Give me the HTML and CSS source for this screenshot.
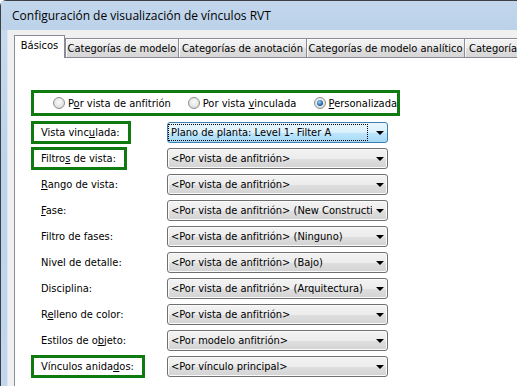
FILE: index.html
```html
<!DOCTYPE html>
<html lang="es">
<head>
  <meta charset="UTF-8">
  <title>Configuración de visualización de vínculos RVT</title>
  <link rel="stylesheet" href="styles.css">
</head>
<body>
  <div class="window">
    <div class="titlebar">Configuración de visualización de vínculos RVT</div>

    <div class="client">
      <!-- pestañas -->
      <div class="tabs">
        <div class="tab active">Básicos</div>
        <div class="tab w2">Categorías de modelo</div>
        <div class="tab w3">Categorías de anotación</div>
        <div class="tab w4">Categorías de modelo analítico</div>
        <div class="tab w5">Categorías importadas</div>
      </div>

      <div class="panel">
        <div class="radio-group mark">
          <div class="radio-item r1"><span class="radio"></span><span>P<u>o</u>r vista de anfitrión</span></div>
          <div class="radio-item r2"><span class="radio"></span><span>Por vista <u>v</u>inculada</span></div>
          <div class="radio-item"><span class="radio on"></span><span><u>P</u>ersonalizada</span></div>
        </div>

        <div class="fields">
          <div class="label mark"><span>Vista vinc<u>u</u>lada:</span></div>
          <div class="combo focus"><span class="value">Plano de planta: Level 1- Filter A</span><span class="arrow"></span></div>

          <div class="label mark"><span>Filtro<u>s</u> de vista:</span></div>
          <div class="combo"><span class="value">&lt;Por vista de anfitrión&gt;</span><span class="arrow"></span></div>

          <div class="label"><u>R</u>ango de vista:</div>
          <div class="combo"><span class="value">&lt;Por vista de anfitrión&gt;</span><span class="arrow"></span></div>

          <div class="label"><u>F</u>ase:</div>
          <div class="combo"><span class="value">&lt;Por vista de anfitrión&gt; (New Construction)</span><span class="arrow"></span></div>

          <div class="label">Filtro de fases:</div>
          <div class="combo"><span class="value">&lt;Por vista de anfitrión&gt; (Ninguno)</span><span class="arrow"></span></div>

          <div class="label">Nivel de detalle:</div>
          <div class="combo"><span class="value">&lt;Por vista de anfitrión&gt; (Bajo)</span><span class="arrow"></span></div>

          <div class="label">Disciplina:</div>
          <div class="combo"><span class="value">&lt;Por vista de anfitrión&gt; (Arquitectura)</span><span class="arrow"></span></div>

          <div class="label">R<u>e</u>lleno de color:</div>
          <div class="combo"><span class="value">&lt;Por vista de anfitrión&gt;</span><span class="arrow"></span></div>

          <div class="label">Estilos de o<u>b</u>jeto:</div>
          <div class="combo"><span class="value">&lt;Por modelo anfitrión&gt;</span><span class="arrow"></span></div>

          <div class="label mark"><span>Vínculos anida<u>d</u>os:</span></div>
          <div class="combo"><span class="value">&lt;Por vínculo principal&gt;</span><span class="arrow"></span></div>
        </div>
      </div>
    </div>
  </div>
</body>
</html>
```

FILE: styles.css
```css
body {
  margin: 0;
  width: 517px;
  height: 386px;
  overflow: hidden;
  background: #ffffff;
  font-family: "DejaVu Sans Condensed", "Liberation Sans", sans-serif;
  font-size: 11px;
  color: #000;
}
.window {
  width: 760px;
  height: 400px;
  display: flex;
  flex-direction: column;
  background: linear-gradient(#c9dcef, #bcd3ea 40%, #c2d7ed);
  border-top: 1px solid #3c3f44;
  border-left: 1px solid #3c3f44;
  border-top-left-radius: 6px;
}
.titlebar {
  height: 29px;
  padding-left: 11px;
  display: flex;
  align-items: center;
  font-family: "Open Sans", "Noto Sans", sans-serif;
  font-size: 12px;
  background: linear-gradient(#c2d7ec, #bcd2ea);
}
.client {
  flex: 1;
  margin-left: 6px;
  border-left: 1px solid #dfe8f1;
  background: #f0f0f0;
  padding: 5px 0 0 6px;
  display: flex;
  flex-direction: column;
}
.tabs {
  display: flex;
  align-items: flex-end;
  height: 22px;
}
.tab {
  box-sizing: border-box;
  height: 19px;
  border: 1px solid #898c95;
  border-bottom: none;
  background: linear-gradient(#f3f3f3, #ebebeb 50%, #e0e0e0 51%, #d6d6d6);
  box-shadow: inset 1px 1px 0 #fcfcfc;
  display: flex;
  align-items: center;
  justify-content: center;
  white-space: nowrap;
  overflow: hidden;
  padding-top: 1px;
}
.tab.active {
  width: 51px;
  height: 23px;
  margin-bottom: -1px;
  background: #ffffff;
  box-shadow: none;
  position: relative;
  z-index: 1;
  padding-top: 0;
  padding-bottom: 3px;
}
.w2 { width: 114px; }
.w3 { width: 129px; margin-left: -1px; }
.w4 { width: 159px; margin-left: -1px; }
.w5 { width: 140px; margin-left: -1px; justify-content: flex-start; padding-left: 4px; }
.panel {
  flex: 1;
  background: #ffffff;
  border-top: 1px solid #898c95;
  border-left: 1px solid #898c95;
}
.mark {
  border: 3px solid #0f7a10;
  box-sizing: border-box;
}
.radio-group {
  width: 369px;
  height: 26px;
  margin: 32px 0 0 16px;
  padding-left: 19px;
  display: flex;
  align-items: center;
}
.radio-item {
  display: flex;
  align-items: center;
  gap: 3px;
  white-space: nowrap;
}
.radio-item.r1 { width: 135px; }
.radio-item.r2 { width: 126px; }
.radio {
  box-sizing: border-box;
  width: 12px;
  height: 12px;
  border-radius: 50%;
  border: 1px solid #8d8f92;
  background: radial-gradient(circle at 50% 40%, #fafafa 0%, #e6e6e6 55%, #cfcfcf 100%);
  display: flex;
  align-items: center;
  justify-content: center;
}
.radio.on::after {
  content: "";
  width: 6px;
  height: 6px;
  border-radius: 50%;
  background: radial-gradient(circle at 40% 35%, #9fd2f6 0%, #2a6fb2 55%, #0c3a6a 100%);
}
.fields {
  display: grid;
  grid-template-columns: 136px 221px;
  grid-auto-rows: 21px;
  row-gap: 5px;
  align-items: center;
  margin: 6px 0 0 16px;
}
.label {
  padding-left: 10px;
  white-space: nowrap;
}
.label.mark {
  justify-self: start;
  height: 23px;
  padding: 0 8px 0 7px;
  display: flex;
  align-items: center;
}
.combo {
  box-sizing: border-box;
  height: 21px;
  border: 1px solid #707070;
  border-radius: 3px;
  background: linear-gradient(#f3f3f3, #ececec 50%, #dfdfdf 51%, #d3d3d3);
  box-shadow: inset 0 0 0 1px #fbfbfb;
  display: flex;
  align-items: center;
  padding: 0 3px 0 1px;
}
.value {
  flex: 1;
  overflow: hidden;
  white-space: nowrap;
  padding: 0 2px;
  margin-right: 4px;
  line-height: 15px;
}
.arrow {
  width: 0;
  height: 0;
  border-left: 4px solid transparent;
  border-right: 4px solid transparent;
  border-top: 4px solid #000;
}
.combo.focus {
  border-color: #3c7fb1;
  background: linear-gradient(#eaf6fd, #d9f0fc 50%, #bee6fd 51%, #a7d9f5);
  box-shadow: none;
}
.combo.focus .value {
  outline: 1px dotted #000;
  margin-right: 9px;
}
```
